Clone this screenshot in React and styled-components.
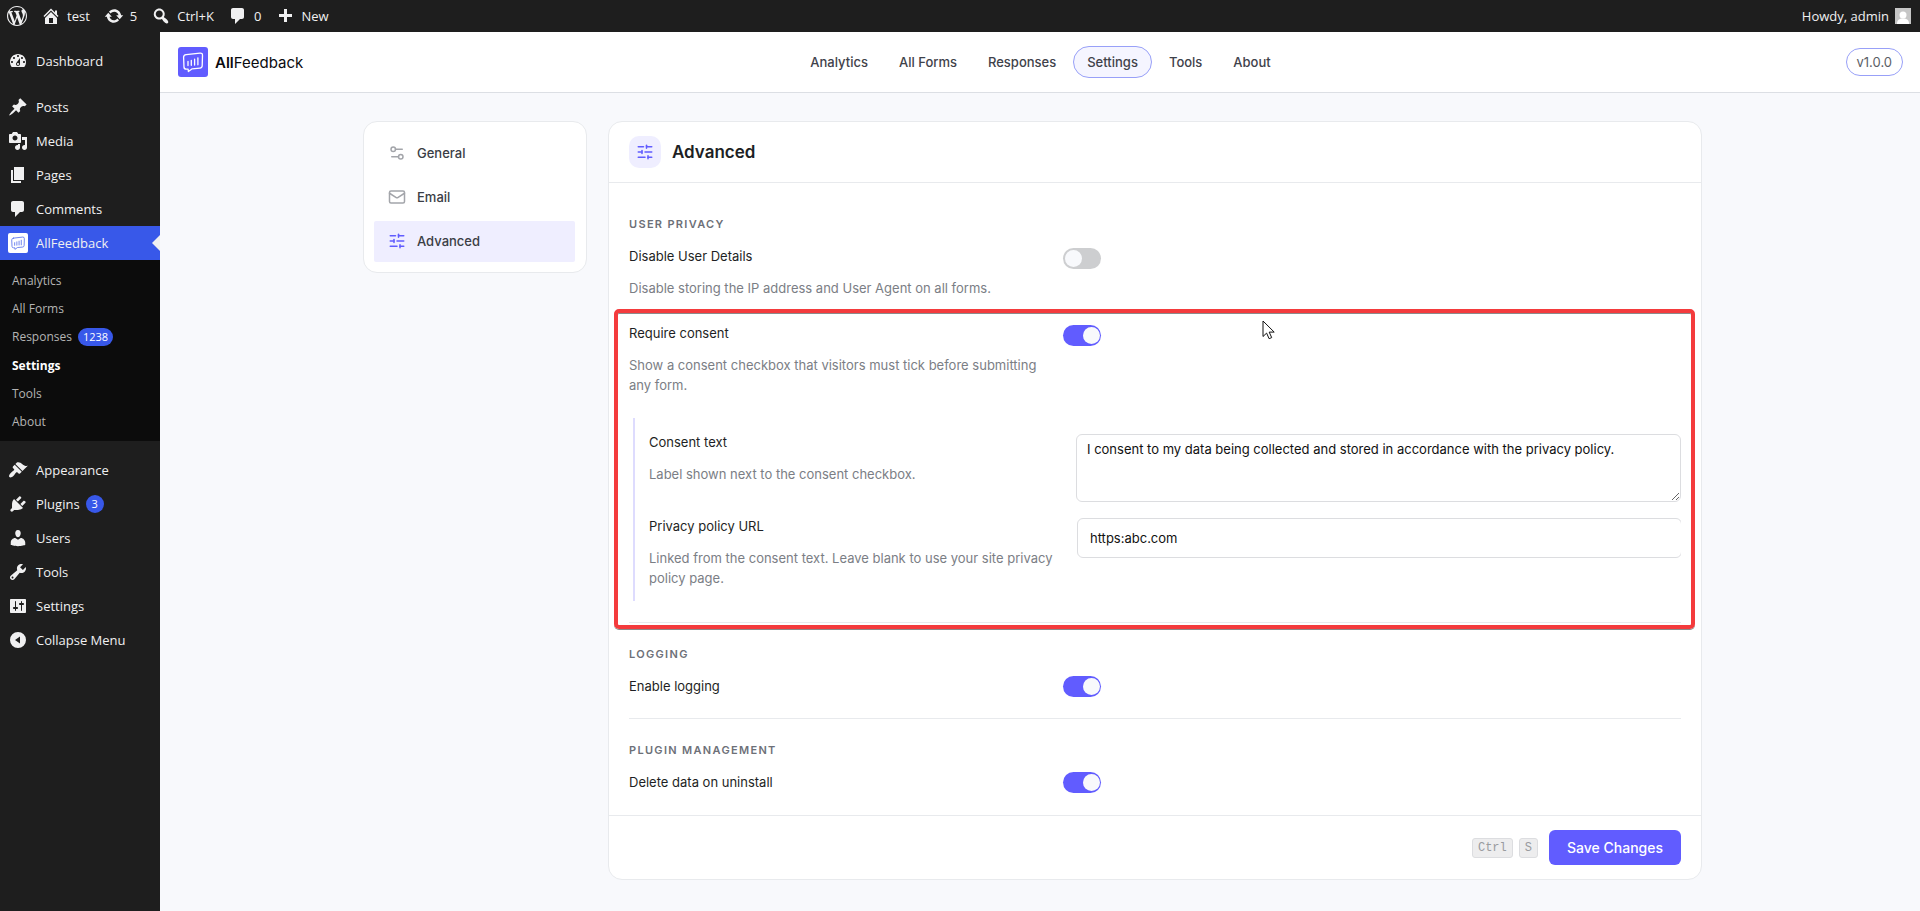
import React, { useState } from 'react'
import styled, { createGlobalStyle } from 'styled-components'
import { Mail, Settings2, SlidersHorizontal } from 'lucide-react'

const GlobalStyle = createGlobalStyle`
  *, *::before, *::after {
    box-sizing: border-box;
  }

  body {
    margin: 0;
    background: #f8f9fc;
    font-family: Inter, sans-serif;
    font-size: 13px;
    color: #1e1f24;
  }

  a {
    color: inherit;
    text-decoration: none;
  }

  ul {
    list-style: none;
    margin: 0;
    padding: 0;
  }
`

// admin icons, all on a 20x20 grid
const paths = {
  wordpress:
    'M20 10c0-5.51-4.49-10-10-10C4.48 0 0 4.49 0 10c0 5.52 4.48 10 10 10 5.51 0 10-4.48 10-10zM7.78 15.37L4.37 6.22c.55-.02 1.17-.08 1.17-.08.5-.06.44-1.13-.06-1.11 0 0-1.45.11-2.37.11-.18 0-.37 0-.58-.01C4.12 2.69 6.87 1.11 10 1.11c2.33 0 4.45.87 6.05 2.34-.68-.11-1.65.39-1.65 1.58 0 .74.45 1.36.9 2.1.35.61.55 1.36.55 2.46 0 1.49-1.4 5-1.4 5l-3.03-8.37c.54-.02.82-.17.82-.17.5-.05.44-1.25-.06-1.22 0 0-1.44.12-2.38.12-.87 0-2.33-.12-2.33-.12-.5-.03-.56 1.2-.06 1.22l.92.08 1.26 3.41zM17.41 10c.24-.64.74-1.87.43-4.25.7 1.29 1.05 2.71 1.05 4.25 0 3.29-1.73 6.24-4.4 7.78.97-2.59 1.94-5.2 2.92-7.78zM6.1 18.09C3.12 16.65 1.11 13.53 1.11 10c0-1.3.23-2.48.72-3.59C3.25 10.3 4.67 14.2 6.1 18.09zm4.03-6.63l2.58 6.98c-.86.29-1.76.45-2.71.45-.79 0-1.57-.11-2.29-.33.81-2.38 1.62-4.74 2.42-7.1z',
  home: 'M16 8.5l1.53 1.53-1.06 1.06L10 4.6l-6.47 6.49-1.06-1.06L10 2.5l4 4v-2h2v4zm-6-2.46l6 5.99V18H4v-5.97zM12 17v-5H8v5h4z',
  update:
    'M10.2 3.28c3.53 0 6.43 2.61 6.92 6h2.08l-3.5 4-3.5-4h2.32c-.45-1.97-2.21-3.45-4.32-3.45-1.45 0-2.73.71-3.54 1.78L4.95 5.66C6.23 4.2 8.11 3.28 10.2 3.28zm-.4 13.44c-3.52 0-6.43-2.61-6.92-6H.8l3.5-4c1.17 1.33 2.33 2.67 3.5 4H5.48c.45 1.97 2.21 3.45 4.32 3.45 1.45 0 2.73-.71 3.54-1.78l1.71 1.95c-1.28 1.46-3.15 2.38-5.25 2.38z',
  search:
    'M12.14 4.18c1.87 1.87 2.11 4.75.72 6.89.12.1.22.21.36.31.2.16.47.36.81.59.34.24.56.39.66.47.42.31.73.57.94.78.32.32.6.65.84 1 .25.35.44.69.59 1.04.14.35.21.68.18 1-.02.32-.14.59-.36.81s-.49.34-.81.36c-.31.02-.65-.04-.99-.19-.35-.14-.7-.34-1.04-.59-.35-.24-.68-.52-1-.84-.21-.21-.47-.52-.77-.93-.1-.13-.25-.35-.47-.66-.22-.32-.4-.57-.56-.78-.16-.2-.29-.35-.44-.5-2.07 1.09-4.69.76-6.44-.98-2.14-2.15-2.14-5.64 0-7.78 2.15-2.15 5.63-2.15 7.78 0zm-1.41 6.36c1.36-1.37 1.36-3.58 0-4.95-1.37-1.37-3.59-1.37-4.95 0-1.37 1.37-1.37 3.58 0 4.95 1.36 1.37 3.58 1.37 4.95 0z',
  plus: 'M17 8v3h-5v5H9v-5H4V8h5V3h3v5h5z',
  dashboard:
    'M3.76 16h12.48c1.1-1.37 1.76-3.11 1.76-5 0-4.42-3.58-8-8-8s-8 3.58-8 8c0 1.89.66 3.63 1.76 5zM10 4c.55 0 1 .45 1 1s-.45 1-1 1-1-.45-1-1 .45-1 1-1zM6 6c.55 0 1 .45 1 1s-.45 1-1 1-1-.45-1-1 .45-1 1-1zm8 0c.55 0 1 .45 1 1s-.45 1-1 1-1-.45-1-1 .45-1 1-1zm-5.37 5.55L12 7v6c0 1.1-.9 2-2 2s-2-.9-2-2c0-.57.24-1.08.63-1.45zM4 10c.55 0 1 .45 1 1s-.45 1-1 1-1-.45-1-1 .45-1 1-1zm12 0c.55 0 1 .45 1 1s-.45 1-1 1-1-.45-1-1 .45-1 1-1zm-5 3c0-.55-.45-1-1-1s-1 .45-1 1 .45 1 1 1 1-.45 1-1z',
  post: 'M10.44 3.02l1.82-1.82 6.36 6.35-1.83 1.82c-1.05-.68-2.48-.57-3.41.36l-.75.75c-.92.93-1.04 2.35-.35 3.41l-1.83 1.82-2.41-2.41-2.8 2.79c-.42.42-3.38 2.71-3.8 2.29s1.86-3.39 2.28-3.81l2.79-2.79L4.1 9.36l1.83-1.82c1.05.69 2.48.57 3.4-.36l.75-.75c.93-.92 1.05-2.35.36-3.41z',
  media:
    'M13 11V4c0-.55-.45-1-1-1h-1.67L9 1H5L3.67 3H2c-.55 0-1 .45-1 1v7c0 .55.45 1 1 1h10c.55 0 1-.45 1-1zM7 4.5c1.38 0 2.5 1.12 2.5 2.5S8.38 9.5 7 9.5 4.5 8.38 4.5 7 5.62 4.5 7 4.5zM14 6h5v10.5c0 1.38-1.12 2.5-2.5 2.5S14 17.88 14 16.5s1.12-2.5 2.5-2.5c.17 0 .34.02.5.05V9h-3V6zm-4 8.05V13h2v3.5c0 1.38-1.12 2.5-2.5 2.5S7 17.88 7 16.5 8.12 14 9.5 14c.17 0 .34.02.5.05z',
  page: 'M6 15V2h10v13H6zm-1 1h8v2H3V5h2v11z',
  comment:
    'M5 2h9c1.1 0 2 .9 2 2v7c0 1.1-.9 2-2 2h-2l-5 5v-5H5c-1.1 0-2-.9-2-2V4c0-1.1.9-2 2-2z',
  appearance:
    'M14.48 11.06L7.41 3.99l1.5-1.5c.5-.56 2.3-.47 3.51.32 1.21.8 1.43 1.28 2.91 2.1 1.18.64 2.45 1.26 4.45.85zm-.71.71L6.7 4.7 4.93 6.47c-.39.39-.39 1.02 0 1.41l1.06 1.06c.39.39.39 1.03 0 1.42-.6.6-1.43 1.11-2.21 1.69-.35.26-.7.53-1.01.84C1.43 14.23.4 16.08 1.4 17.07c.99 1 2.84-.03 4.18-1.36.31-.31.58-.66.85-1.02.57-.78 1.08-1.61 1.69-2.21.39-.39 1.02-.39 1.41 0l1.06 1.06c.39.39 1.02.39 1.41 0z',
  plugins:
    'M13.11 4.36L9.87 7.6 8 5.73l3.24-3.24c.35-.34 1.05-.2 1.56.32.52.51.66 1.21.31 1.55zm-8 1.77l.91-1.12 9.01 9.01-1.19.84c-.71.71-2.63 1.16-3.82 1.16H6.14L4.9 17.26c-.59.59-1.54.59-2.12 0-.59-.58-.59-1.53 0-2.12l1.24-1.24v-3.88c0-1.13.4-3.19 1.09-3.89zm7.26 3.97l3.24-3.24c.34-.35 1.04-.21 1.55.31.52.51.66 1.21.31 1.55l-3.24 3.25z',
  users:
    'M10 9.25c-2.27 0-2.73-3.44-2.73-3.44C7 4.02 7.82 2 9.97 2c2.16 0 2.98 2.02 2.71 3.81 0 0-.41 3.44-2.68 3.44zm0 2.57L12.72 10c2.39 0 4.52 2.33 4.52 4.53v2.49s-3.65 1.13-7.24 1.13c-3.65 0-7.24-1.13-7.24-1.13v-2.49c0-2.25 1.94-4.48 4.47-4.48z',
  tools:
    'M16.68 9.77c-1.34 1.34-3.3 1.67-4.95.99l-5.41 6.52c-.99.99-2.59.99-3.58 0s-.99-2.59 0-3.57l6.52-5.42c-.68-1.65-.35-3.61.99-4.95 1.28-1.28 3.12-1.62 4.72-1.06l-2.89 2.89 2.82 2.82 2.86-2.87c.53 1.58.18 3.39-1.08 4.65zM3.81 16.21c.4.39 1.04.39 1.43 0 .4-.4.4-1.04 0-1.43-.39-.4-1.03-.4-1.43 0-.39.39-.39 1.03 0 1.43z',
  settings:
    'M18 16V4c0-.55-.45-1-1-1H3c-.55 0-1 .45-1 1v12c0 .55.45 1 1 1h14c.55 0 1-.45 1-1zM8 11h1c.55 0 1 .45 1 1s-.45 1-1 1H8v1.5c0 .28-.22.5-.5.5s-.5-.22-.5-.5V13H6c-.55 0-1-.45-1-1s.45-1 1-1h1V5.5c0-.28.22-.5.5-.5s.5.22.5.5V11zm5-2h-1c-.55 0-1-.45-1-1s.45-1 1-1h1V5.5c0-.28.22-.5.5-.5s.5.22.5.5V7h1c.55 0 1 .45 1 1s-.45 1-1 1h-1v5.5c0 .28-.22.5-.5.5s-.5-.22-.5-.5V9z',
  collapse: 'M10 2a8 8 0 1 0 0 16 8 8 0 0 0 0-16zM12 6.5v7L7 10z',
}

const DashIcon = ({ name }) => (
  <svg width="20" height="20" viewBox="0 0 20 20" fill="currentColor" fillRule="evenodd" aria-hidden="true">
    <path d={paths[name]} />
  </svg>
)

const BrandIcon = ({ size, bg, fg }) => (
  <svg width={size} height={size} viewBox="0 0 30 30" fill="none" aria-hidden="true">
    <rect width="30" height="30" rx="3" fill={bg} />
    <g stroke={fg} strokeWidth="1.3" strokeLinecap="round" strokeLinejoin="round">
      <path d="M8.2 7.7 22 6.1q2.6-.2 2.5 2.3l-.3 10.4q-.1 2.1-2.3 2.3l-7.7.7-3.8 2.7-.3-2.4-1.8.1q-2.2 0-2.3-2.1L5.6 10.3q0-2.3 2.6-2.6z" />
      <path d="M10 14.5v4M13.3 13.3v5M16.6 12.2v5.8M19.9 10.8v7" />
    </g>
  </svg>
)

const menuTop = [
  { icon: 'post', label: 'Posts' },
  { icon: 'media', label: 'Media' },
  { icon: 'page', label: 'Pages' },
  { icon: 'comment', label: 'Comments' },
]

const subMenu = [
  { label: 'Analytics' },
  { label: 'All Forms' },
  { label: 'Responses', count: 1238 },
  { label: 'Settings', current: true },
  { label: 'Tools' },
  { label: 'About' },
]

const menuBottom = [
  { icon: 'appearance', label: 'Appearance' },
  { icon: 'plugins', label: 'Plugins', count: 3 },
  { icon: 'users', label: 'Users' },
  { icon: 'tools', label: 'Tools' },
  { icon: 'settings', label: 'Settings' },
]

const tabs = ['Analytics', 'All Forms', 'Responses', 'Settings', 'Tools', 'About']

const sections = [
  { label: 'General', Icon: Settings2 },
  { label: 'Email', Icon: Mail },
  { label: 'Advanced', Icon: SlidersHorizontal },
]

const MenuList = ({ items }) => (
  <ul>
    {items.map(({ icon, label, count }) => (
      <li key={label}>
        <MenuLink href="#">
          <DashIcon name={icon} />
          <span>{label}</span>
          {count && <Count>{count}</Count>}
        </MenuLink>
      </li>
    ))}
  </ul>
)

const ToggleRow = ({ id, label, description, checked, onChange }) => (
  <Row>
    <div>
      <Label htmlFor={id}>{label}</Label>
      {description && <Description>{description}</Description>}
    </div>
    <Toggle
      id={id}
      type="checkbox"
      role="switch"
      checked={checked}
      onChange={e => onChange(id, e.target.checked)}
      $described={Boolean(description)}
    />
  </Row>
)

const App = () => {
  const [values, setValues] = useState({
    disableDetails: false,
    requireConsent: true,
    consentText:
      'I consent to my data being collected and stored in accordance with the privacy policy.',
    policyUrl: 'https:abc.com',
    logging: true,
    deleteData: true,
  })
  const update = (name, value) => setValues({ ...values, [name]: value })

  return (
    <>
      <GlobalStyle />
      <AdminBar>
        <BarLink href="#" aria-label="WordPress">
          <DashIcon name="wordpress" />
        </BarLink>
        <BarLink href="#">
          <DashIcon name="home" />
          test
        </BarLink>
        <BarLink href="#">
          <DashIcon name="update" />5
        </BarLink>
        <BarLink href="#">
          <DashIcon name="search" />
          Ctrl+K
        </BarLink>
        <BarLink href="#">
          <DashIcon name="comment" />0
        </BarLink>
        <BarLink href="#">
          <DashIcon name="plus" />
          New
        </BarLink>
        <Account href="#">
          Howdy, admin
          <svg width="16" height="16" viewBox="0 0 16 16" aria-hidden="true">
            <rect width="16" height="16" fill="#c6c6c6" />
            <circle cx="8" cy="7" r="3.5" fill="#fff" />
            <path d="M2 16c0-4 2-5.500 6-5.500s6 1.500 6 5.500z" fill="#fff" />
          </svg>
        </Account>
      </AdminBar>

      <Shell>
        <Sidebar>
          <MenuList items={[{ icon: 'dashboard', label: 'Dashboard' }]} />
          <Separator />
          <MenuList items={menuTop} />
          <MenuLink href="#" $current>
            <BrandIcon size={20} bg="#fff" fg="#5b74ec" />
            <span>AllFeedback</span>
          </MenuLink>
          <SubMenu>
            {subMenu.map(({ label, count, current }) => (
              <li key={label}>
                <SubLink href="#" $current={current}>
                  {label}
                  {count && <Count>{count}</Count>}
                </SubLink>
              </li>
            ))}
          </SubMenu>
          <Separator />
          <MenuList items={menuBottom} />
          <CollapseButton type="button">
            <DashIcon name="collapse" />
            Collapse Menu
          </CollapseButton>
        </Sidebar>

        <Page>
          <Header>
            <Brand href="#">
              <BrandIcon size={30} bg="#615cff" fg="#fff" />
              <span>
                <b>All</b>Feedback
              </span>
            </Brand>
            <Tabs>
              {tabs.map(tab => (
                <Tab key={tab} href="#" $active={tab === 'Settings'}>
                  {tab}
                </Tab>
              ))}
            </Tabs>
            <Version>v1.0.0</Version>
          </Header>

          <Content>
            <SectionNav>
              {sections.map(({ label, Icon }) => (
                <SectionLink key={label} href="#" $active={label === 'Advanced'}>
                  <Icon size={18} />
                  {label}
                </SectionLink>
              ))}
            </SectionNav>

            <Panel>
              <CardHead>
                <HeadIcon>
                  <SlidersHorizontal size={18} />
                </HeadIcon>
                <Title>Advanced</Title>
              </CardHead>

              <CardBody>
                <GroupTitle>User privacy</GroupTitle>
                <ToggleRow
                  id="disableDetails"
                  label="Disable User Details"
                  description="Disable storing the IP address and User Agent on all forms."
                  checked={values.disableDetails}
                  onChange={update}
                />
                <ConsentGroup>
                  <ToggleRow
                    id="requireConsent"
                    label="Require consent"
                    description="Show a consent checkbox that visitors must tick before submitting any form."
                    checked={values.requireConsent}
                    onChange={update}
                  />
                  <Nested>
                    <Row>
                      <div>
                        <Label htmlFor="consentText">Consent text</Label>
                        <Description>Label shown next to the consent checkbox.</Description>
                      </div>
                      <Field>
                        <TextArea
                          id="consentText"
                          value={values.consentText}
                          onChange={e => update('consentText', e.target.value)}
                        />
                      </Field>
                    </Row>
                    <Row>
                      <div>
                        <Label htmlFor="policyUrl">Privacy policy URL</Label>
                        <Description>
                          Linked from the consent text. Leave blank to use your site privacy policy
                          page.
                        </Description>
                      </div>
                      <Field>
                        <TextInput
                          id="policyUrl"
                          type="text"
                          value={values.policyUrl}
                          onChange={e => update('policyUrl', e.target.value)}
                        />
                      </Field>
                    </Row>
                  </Nested>
                  <Highlight />
                  <Pointer width="14" height="20" viewBox="0 0 14 20" aria-hidden="true">
                    <path
                      d="M1 1v15.500l3.600-3.400 2.500 5.600 2.600-1.100-2.500-5.500h5z"
                      fill="#fff"
                      stroke="#111"
                    />
                  </Pointer>
                </ConsentGroup>

                <Divider />
                <GroupTitle>Logging</GroupTitle>
                <ToggleRow
                  id="logging"
                  label="Enable logging"
                  checked={values.logging}
                  onChange={update}
                />
                <Divider />
                <GroupTitle>Plugin management</GroupTitle>
                <ToggleRow
                  id="deleteData"
                  label="Delete data on uninstall"
                  checked={values.deleteData}
                  onChange={update}
                />
              </CardBody>

              <CardFoot>
                <Key>Ctrl</Key>
                <Key>S</Key>
                <SaveButton type="button">Save Changes</SaveButton>
              </CardFoot>
            </Panel>
          </Content>
        </Page>
      </Shell>
    </>
  )
}

const AdminBar = styled.div`
  display: flex;
  height: 32px;
  padding-right: 9px;
  background: #1e1e1e;
  color: #f0f0f1;
  font-family: 'Open Sans', sans-serif;
  font-size: 13px;
`

const BarLink = styled.a`
  display: flex;
  align-items: center;
  gap: 6px;
  padding: 0 7px;
`

const Account = styled(BarLink)`
  padding: 0;
  margin-left: auto;
`

const Shell = styled.div`
  display: flex;
  min-height: calc(100vh - 32px);
`

const Sidebar = styled.nav`
  flex: 0 0 160px;
  padding-top: 12px;
  background: #1e1e1e;
  color: #f0f0f1;
  font-family: 'Open Sans', sans-serif;
`

const Separator = styled.div`
  height: 12px;
`

const MenuLink = styled.a`
  position: relative;
  display: flex;
  align-items: center;
  height: 34px;
  padding-left: 8px;
  background: ${props => (props.$current ? '#3858e9' : 'transparent')};

  svg {
    margin-right: 8px;
  }

  /* notch pointing at the page */
  &::after {
    content: '';
    display: ${props => (props.$current ? 'block' : 'none')};
    position: absolute;
    right: 0;
    border: 8px solid transparent;
    border-right-color: #f0f0f1;
  }
`

const Count = styled.span`
  min-width: 18px;
  height: 18px;
  padding: 0 5px;
  margin-left: 6px;
  border-radius: 9px;
  background: #3858e9;
  color: #fff;
  font-size: 11px;
  line-height: 18px;
  text-align: center;
`

const SubMenu = styled.ul`
  padding: 6px 0;
  background: #0c0c0c;
`

const SubLink = styled.a`
  display: flex;
  align-items: center;
  min-height: 28px;
  padding-left: 12px;
  color: ${props => (props.$current ? '#fff' : '#b4b4b4')};
  font-size: 12px;
  font-weight: ${props => (props.$current ? 700 : 400)};

  ${Count} {
    margin: 6px 0 5px 6px;
  }
`

const CollapseButton = styled.button`
  display: flex;
  align-items: center;
  gap: 8px;
  height: 34px;
  padding: 0 0 0 8px;
  border: 0;
  background: none;
  color: inherit;
  font: inherit;
`

const Page = styled.div`
  flex: 1;
  min-width: 0;
`

const Header = styled.header`
  display: grid;
  grid-template-columns: 1fr auto 1fr;
  align-items: center;
  height: 61px;
  padding: 0 17px 0 18px;
  border-bottom: 1px solid #dcdfe4;
  background: #fff;
`

const Brand = styled.a`
  display: flex;
  align-items: center;
  gap: 7px;
  color: #0b0b0f;
  font-size: 15px;

  b {
    font-weight: 600;
  }
`

const Tabs = styled.nav`
  display: flex;
  gap: 3px;
`

const Tab = styled.a`
  padding: 5px 13px;
  border: 1px solid ${props => (props.$active ? '#98a0f8' : 'transparent')};
  border-radius: 16px;
  background: ${props => (props.$active ? '#f5f5ff' : 'transparent')};
  color: #3f424a;
  font-weight: 500;
  line-height: 20px;
`

const Version = styled.span`
  justify-self: end;
  padding: 3px 10px;
  border: 1px solid #98a0f8;
  border-radius: 14px;
  color: #5b5e66;
  line-height: 20px;
`

const Content = styled.main`
  display: grid;
  grid-template-columns: 224px minmax(0, 1fr);
  align-items: start;
  gap: 21px;
  max-width: 1354px;
  margin: 28px auto;
  padding-right: 15px;
`

const Panel = styled.div`
  border: 1px solid #e8eaed;
  border-radius: 14px;
  background: #fff;
`

const SectionNav = styled(Panel).attrs({ as: 'nav' })`
  display: grid;
  gap: 3px;
  padding: 11px 11px 10px 10px;
`

const SectionLink = styled.a`
  display: flex;
  align-items: center;
  gap: 11px;
  height: 41px;
  padding: 0 14px 2px;
  border-radius: 2px;
  background: ${props => (props.$active ? '#efeeff' : 'transparent')};
  color: #3a3d45;
  font-weight: 500;

  svg {
    color: ${props => (props.$active ? '#615cff' : '#a3a5aa')};
  }
`

const CardHead = styled.div`
  display: flex;
  align-items: center;
  gap: 11px;
  padding: 14px 20px;
  border-bottom: 1px solid #e8eaed;
`

const HeadIcon = styled.span`
  display: grid;
  place-items: center;
  width: 32px;
  height: 32px;
  border-radius: 10px;
  background: #efeeff;
  color: #615cff;
`

const Title = styled.h1`
  margin: 0;
  font-size: 17px;
  font-weight: 600;
`

const CardBody = styled.div`
  padding: 33px 20px 22px;
`

const GroupTitle = styled.h2`
  margin: 0 0 14px;
  color: #6d7078;
  font-size: 11px;
  font-weight: 600;
  letter-spacing: 0.12em;
  line-height: 16px;
  text-transform: uppercase;
`

const Row = styled.div`
  display: grid;
  grid-template-columns: 2fr 3fr;
  align-items: start;
  gap: 22px;
`

const Label = styled.label`
  display: block;
  line-height: 20px;
`

const Description = styled.p`
  margin: 12px 0 0;
  color: #7b7e85;
  line-height: 20px;
`

const Toggle = styled.input`
  appearance: none;
  width: 38px;
  height: 21px;
  margin: ${props => (props.$described ? '2px' : 0)} 0 0;
  padding: 2px;
  border-radius: 11px;
  background: #cdced0;

  &::before {
    content: '';
    display: block;
    width: 17px;
    height: 17px;
    border-radius: 50%;
    background: #f8f9fc;
  }

  &:checked {
    background: #615cff;
  }

  &:checked::before {
    margin-left: 18px;
  }
`

const ConsentGroup = styled.div`
  position: relative;
  margin-top: 25px;
`

const Nested = styled.div`
  display: grid;
  gap: 14px;
  margin: 23px 0 0 4px;
  padding: 14px 0 13px 14px;
  border-left: 2px solid #dedcfe;
`

const Field = styled.div`
  overflow: hidden;
  padding: 2px 0 0 1px;
`

const TextArea = styled.textarea`
  display: block;
  width: 100%;
  height: 68px;
  padding: 4px 10px;
  border: 1px solid #dcdde0;
  border-radius: 6px;
  background: #fff;
  color: #111;
  font: inherit;
  line-height: 20px;
`

const TextInput = styled.input`
  width: 100%;
  height: 40px;
  margin-left: 1px;
  padding: 0 12px;
  border: 1px solid #dcdde0;
  border-radius: 6px;
  background: #fff;
  color: #111;
  font: inherit;
`

const Highlight = styled.div`
  position: absolute;
  inset: -14px -14px -28px -15px;
  border: 4px solid #f43b3d;
  border-radius: 5px;
  box-shadow: 0 1px 0 #8b8b8b, inset 0 1px 0 #8b8b8b;
  pointer-events: none;
`

const Pointer = styled.svg`
  position: absolute;
  top: -3px;
  left: 60.2%;
  pointer-events: none;
`

const Divider = styled.hr`
  margin: 21px 0 23px;
  border: 0;
  border-top: 1px solid #e8eaed;
`

const CardFoot = styled.div`
  display: flex;
  align-items: center;
  justify-content: flex-end;
  gap: 6px;
  padding: 14px 20px;
  border-top: 1px solid #e8eaed;
`

const Key = styled.kbd`
  padding: 0 5px;
  border: 1px solid #dcdde0;
  border-radius: 3px;
  background: #ededee;
  color: #999b9f;
  font-family: 'Liberation Mono', monospace;
  font-size: 12px;
  line-height: 18px;
`

const SaveButton = styled.button`
  height: 35px;
  margin-left: 5px;
  padding: 0 18px;
  border: 0;
  border-radius: 6px;
  background: #615cff;
  color: #fff;
  font: inherit;
  font-size: 14px;
  font-weight: 500;
`

export default App
